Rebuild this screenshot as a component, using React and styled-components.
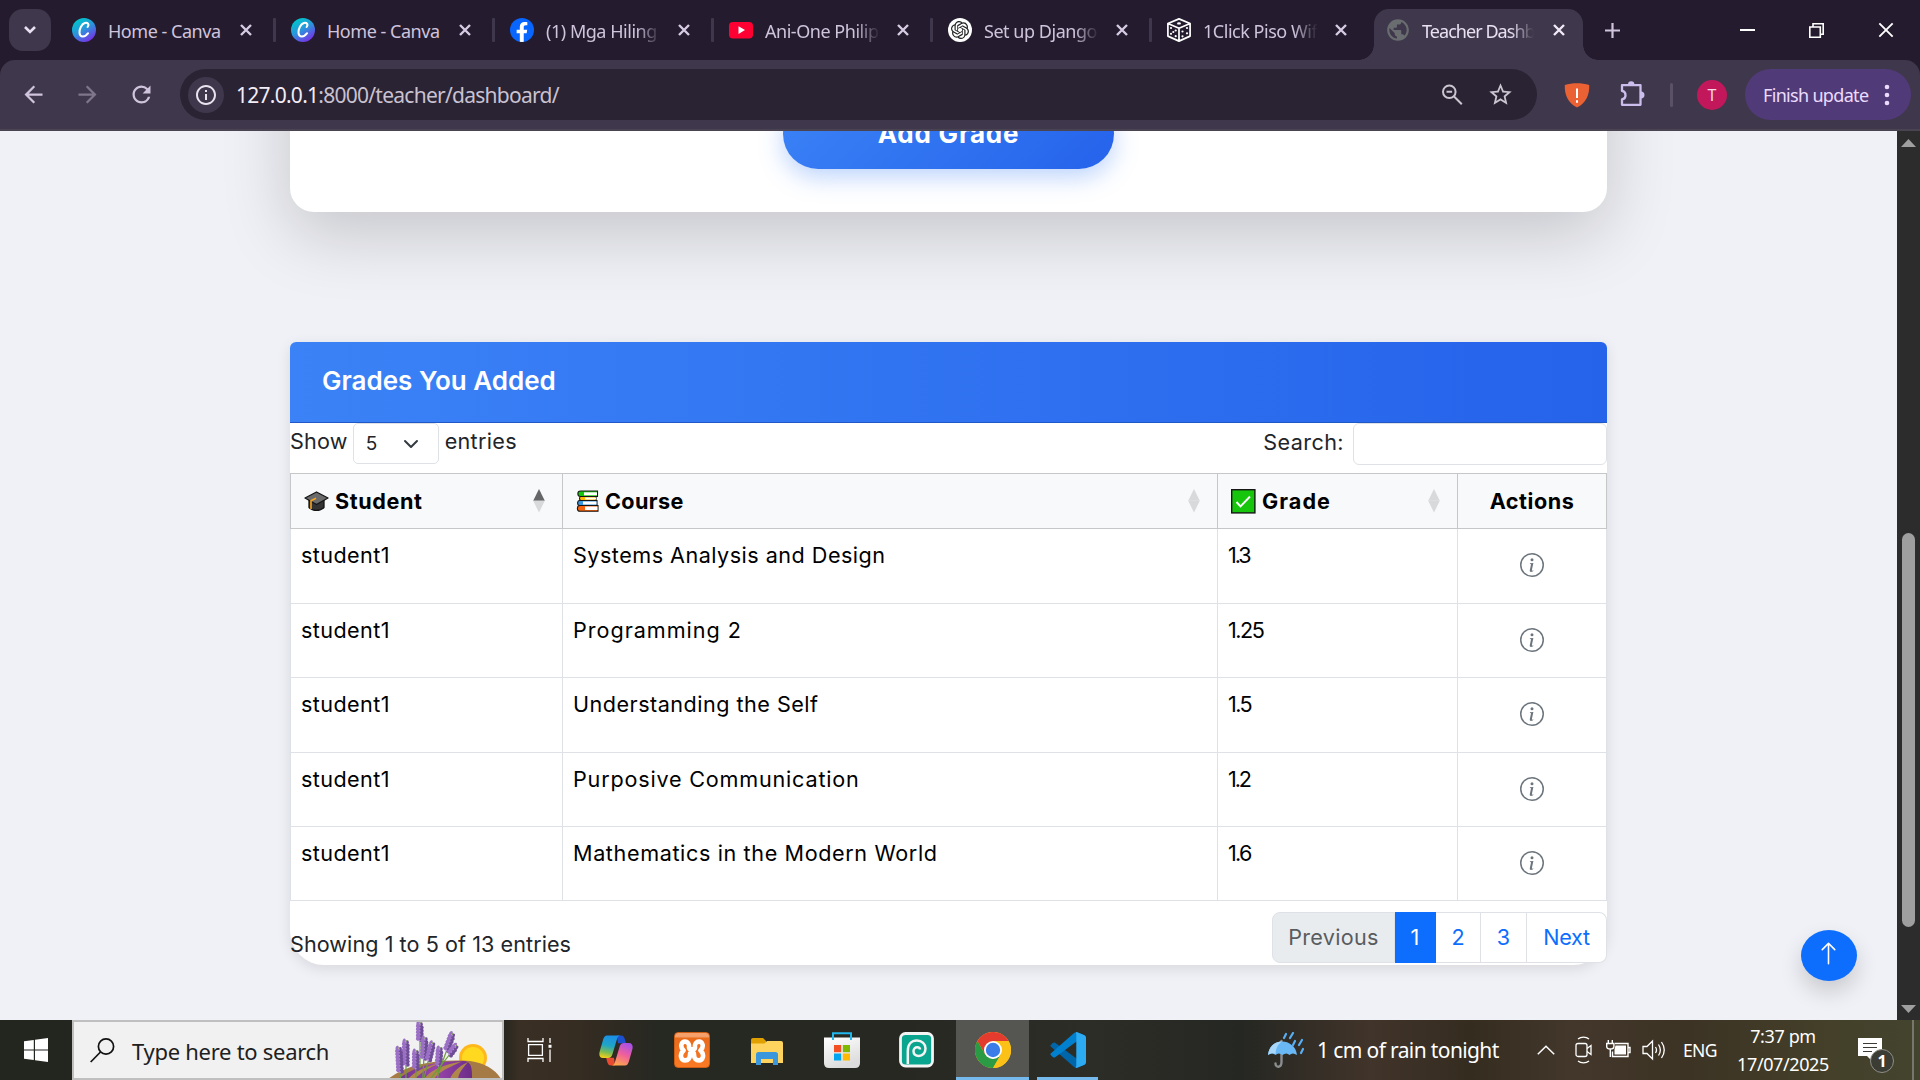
import React from "react";
import styled, { createGlobalStyle, css } from "styled-components";
import { MdPublic, MdRefresh, MdStarBorder, MdInfoOutline, MdArrowBack, MdArrowForward } from "react-icons/md";
import { BsInfoCircle, BsArrowUp } from "react-icons/bs";
import { SiOpenai } from "react-icons/si";
import { FaFacebookF } from "react-icons/fa";

const GlobalStyle = createGlobalStyle`
  *, *::before, *::after { box-sizing: border-box; }
  body { margin: 0; background: #f0f1f6; overflow: hidden; }
  svg { display: block; flex: none; }
`;

const Screen = styled.div`
  width: 1920px;
  height: 1080px;
  display: flex;
  flex-direction: column;
  overflow: hidden;
  font-family: "Noto Sans", "Open Sans", sans-serif;
`;

const Label = styled.span`
  display: block;
  white-space: nowrap;
  font-size: ${(p) => p.$size || 21.6}px;
  letter-spacing: ${(p) => p.$track || 0}px;
  font-weight: ${(p) => p.$weight || "inherit"};
`;

/* ---------- Browser window ---------- */

const TabStrip = styled.header`
  height: 60px;
  background: #241c2e;
  display: flex;
  padding-left: 9px;
  flex: none;
`;

const TabSearch = styled.div`
  width: 42px;
  height: 42px;
  margin-top: 9px;
  margin-right: 6px;
  border-radius: 14px;
  background: #3f374b;
  display: flex;
  align-items: center;
  justify-content: center;
`;

const Tab = styled.div`
  width: 219px;
  height: 60px;
  display: flex;
  align-items: center;
  padding-left: 15px;
  color: #cfc4dc;
`;

const ActiveTab = styled.div`
  width: 209px;
  height: 51px;
  margin: 9px 0 0 3px;
  padding: 0 0 9px 11px;
  border-radius: 15px 15px 0 0;
  background: #3f374b;
  color: #e9e0f2;
  display: flex;
  align-items: center;
  position: relative;
  &::before, &::after {
    content: "";
    position: absolute;
    bottom: 0;
    width: 15px;
    height: 15px;
  }
  &::before { left: -15px; background: radial-gradient(circle at 0 0, transparent 14.5px, #3f374b 15px); }
  &::after { right: -15px; background: radial-gradient(circle at 100% 0, transparent 14.5px, #3f374b 15px); }
`;

const TabTitle = styled.div`
  width: ${(p) => p.$width || 116}px;
  margin-left: ${(p) => p.$gap || 12}px;
  padding-top: 2px;
  font-size: 18px;
  line-height: 26px;
  letter-spacing: ${(p) => p.$track || -0.47}px;
  white-space: nowrap;
  overflow: hidden;
  ${(p) => p.$fade && css`mask-image: linear-gradient(90deg, #000 78%, transparent 99%);`}
`;

const CloseSlot = styled.div`
  width: 12px;
  margin-left: ${(p) => p.$left}px;
`;

const TabDivider = styled.i`
  width: 3px;
  height: 24px;
  margin-left: 21px;
  border-radius: 1px;
  background: #3f374b;
`;

const WindowControls = styled.div`
  display: flex;
  align-items: center;
  gap: 54px;
  height: 60px;
  margin-left: 120px;
`;

const NewTab = styled.div`
  display: flex;
  align-items: center;
  height: 60px;
  margin-left: 22px;
`;

const ToolbarBack = styled.div`
  flex: none;
  background: #241c2e;
`;

const Toolbar = styled.div`
  height: 71px;
  background: #3f374b;
  border-bottom: 2px solid #4a4452;
  border-radius: 15px 15px 0 0;
  display: flex;
  align-items: center;
  padding: 0 9px 0 19.5px;
  color: #cfc4dc;
`;

const NavButtons = styled.div`
  display: flex;
  align-items: center;
  gap: 27px;
  margin-right: 25.5px;
`;

const NavIcon = styled.span`
  display: flex;
  opacity: ${(p) => (p.$dim ? 0.45 : 1)};
`;

const Omnibox = styled.div`
  width: 1357px;
  height: 51px;
  border-radius: 26px;
  background: #2a2334;
  display: flex;
  align-items: center;
  padding: 0 23px 0 8px;
`;

const SiteInfo = styled.div`
  width: 36px;
  height: 36px;
  border-radius: 50%;
  background: #3f374b;
  color: #e9e3ef;
  display: flex;
  align-items: center;
  justify-content: center;
  margin-right: 12px;
`;

const Url = styled.div`
  flex: 1;
  font-size: 21px;
  line-height: 30px;
  letter-spacing: -0.74px;
  color: #c9c2d0;
  b { font-weight: 400; color: #f3edf8; }
`;

const OmniActions = styled.div`
  display: flex;
  align-items: center;
  gap: 23px;
  color: #cac5cf;
`;

const Extensions = styled.div`
  display: flex;
  align-items: center;
  margin-left: 27px;
`;

const ToolDivider = styled.i`
  width: 3px;
  height: 24px;
  margin: 0 24px;
  border-radius: 2px;
  background: #5a5167;
`;

const Avatar = styled.div`
  width: 30px;
  height: 30px;
  border-radius: 50%;
  background: #c2185b;
  color: #f5d9e4;
  font-size: 16px;
  line-height: 30px;
  text-align: center;
`;

const UpdateButton = styled.div`
  width: 166px;
  height: 51px;
  margin-left: 18px;
  border-radius: 26px;
  background: #513a78;
  color: #ebdcff;
  display: flex;
  align-items: center;
  justify-content: space-between;
  padding: 0 21px 0 18px;
`;

/* ---------- Page ---------- */

const Viewport = styled.div`
  height: 889px;
  flex: none;
  display: flex;
  position: relative;
  overflow: hidden;
`;

const Page = styled.main`
  width: 1897px;
  padding: 0 290px;
  overflow: hidden;
  background: #f0f1f6;
  font-family: Inter, "Open Sans", sans-serif;
  color: #212529;
`;

const FormCard = styled.section`
  height: 500px;
  margin: -419px 0 130px;
  border-radius: 24px;
  background: #fff;
  box-shadow: 0 22px 68px rgba(0, 0, 0, 0.18);
  display: flex;
  align-items: flex-end;
  justify-content: center;
  padding-bottom: 43px;
`;

const AddButton = styled.button`
  width: 331px;
  height: 70px;
  border: 0;
  padding: 0 0 1px;
  border-radius: 35px;
  background: linear-gradient(135deg, #3b82f6, #2563eb);
  box-shadow: 0 8px 24px rgba(59, 130, 246, 0.35);
  color: #fff;
  font: 700 26px/36px Inter, sans-serif;
  letter-spacing: 0.8px;
`;

const GradesCard = styled.section`
  height: 623px;
  background: #fff;
  border-radius: 6px 6px 34px 34px;
  box-shadow: 0 4px 14px rgba(0, 0, 0, 0.1);
`;

const CardHeader = styled.div`
  height: 81px;
  border-bottom: 1px solid #2158c8;
  border-radius: 6px 6px 0 0;
  background: linear-gradient(90deg, #3b82f6, #2563eb);
  color: #fff;
  padding: 23px 32px;
  line-height: 32px;
`;

const Controls = styled.div`
  height: 50px;
  display: flex;
  justify-content: space-between;
  line-height: 37px;
`;

const ControlGroup = styled.div`
  display: flex;
  align-items: flex-start;
`;

const SearchLabel = styled(Label)`
  line-height: 39px;
`;

const LengthSelect = styled.div`
  width: 86px;
  height: 41px;
  margin: 0 6px 0 5px;
  padding: 0 19px 0 12px;
  border: 1px solid #dee2e6;
  border-radius: 5px;
  display: flex;
  align-items: center;
  justify-content: space-between;
`;

const SearchInput = styled.input`
  width: 254px;
  height: 42px;
  margin-left: 9px;
  border: 1px solid #dee2e6;
  border-radius: 6px;
  background: #fff;
`;

const gridColumns = css`
  display: grid;
  grid-template-columns: 272px 655px 240px 149px;
`;

const HeadRow = styled.div`
  ${gridColumns}
  height: 56px;
  border: 1px solid #c6c7c8;
  border-width: 1px 0 1px 1px;
  background: #f8f9fb;
  color: #000;
`;

const HeadCell = styled.div`
  display: flex;
  align-items: center;
  justify-content: ${(p) => (p.$center ? "center" : "flex-start")};
  padding-left: ${(p) => (p.$center ? 0 : 13)}px;
  padding-right: ${(p) => (p.$center ? 0 : 17)}px;
  border-right: 1px solid #c6c7c8;
  line-height: 32px;
`;

const HeadIcon = styled.span`
  width: ${(p) => p.$width || 25}px;
  margin-right: 6px;
`;

const SortMark = styled.span`
  margin-left: auto;
`;

const BodyRow = styled.div`
  ${gridColumns}
  height: 74.25px;
  color: #000;
  border-left: 1px solid #dee2e6;
  ${HeadRow} + & { height: 75px; }
`;

const BodyCell = styled.div`
  border: 1px solid #dee2e6;
  border-width: 0 1px 1px 0;
  padding: 10px 10px;
  line-height: 33px;
`;

const InfoCell = styled(BodyCell)`
  display: flex;
  justify-content: center;
  padding: 24px 0 0;
  color: #6c757d;
`;

const CardFooter = styled.div`
  display: flex;
  justify-content: space-between;
  padding-top: 11px;
  line-height: 64px;
`;

const Pagination = styled.nav`
  display: flex;
  height: 51px;
`;

const PageItem = styled.span`
  width: ${(p) => p.$width}px;
  height: 51px;
  line-height: 48px;
  display: flex;
  justify-content: center;
  border: 1px solid #dee2e6;
  border-left-width: ${(p) => (p.$first ? 1 : 0)}px;
  background: #fff;
  color: #0d6efd;
  &:first-child { border-radius: 8px 0 0 8px; }
  &:last-child { border-radius: 0 8px 8px 0; }
  ${(p) => p.$disabled && css`background: #e9ecef; color: #595c5f;`}
  ${(p) => p.$active && css`background: #0d6efd; border-color: #0d6efd; color: #fff;`}
`;

const TopButton = styled.div`
  position: absolute;
  left: 1801px;
  top: 799px;
  width: 56px;
  height: 51px;
  border-radius: 50%;
  background: #0d6efd;
  color: #fff;
  box-shadow: 0 11px 22px rgba(0, 0, 0, 0.16);
  display: flex;
  align-items: center;
  justify-content: center;
  padding: 0 1px 4px 0;
`;

const Scrollbar = styled.div`
  width: 23px;
  height: 889px;
  background: #2c2c2c;
  display: flex;
  flex-direction: column;
  align-items: center;
  padding: 8px 0 7px;
`;

const Thumb = styled.div`
  width: 13px;
  height: 394px;
  margin: 386px 0 auto;
  border-radius: 7px;
  background: #9f9f9f;
`;

/* ---------- Taskbar ---------- */

const Taskbar = styled.footer`
  height: 60px;
  flex: none;
  display: flex;
  color: #fff;
  background: linear-gradient(90deg, #23251f 0, #23251f 500px, #3a2f24 520px, #352c22 580px, #262822 660px, #272822 900px, #2d2d27 1090px, #252722 1240px, #41342a 1370px, #352c20 1470px, #43372b 1570px, #3c3324 1690px, #444029 1830px, #43442f 1920px);
`;

const StartButton = styled.div`
  width: 72px;
  display: flex;
  align-items: center;
  justify-content: center;
`;

const SearchBox = styled.div`
  width: 432px;
  height: 60px;
  border: 2px solid #bfbfbf;
  background: #f1f1f1;
  color: #202020;
  display: flex;
  align-items: center;
  padding-left: 16px;
  overflow: hidden;
`;

const SearchText = styled(Label)`
  width: 260px;
  margin-left: 17px;
  padding-top: 1px;
`;

const TaskSlot = styled.div`
  width: ${(p) => p.$width || 75}px;
  height: 60px;
  display: flex;
  align-items: center;
  justify-content: center;
  border-bottom: 3px solid ${(p) => (p.$open ? "#76b9ed" : "transparent")};
  padding-top: ${(p) => p.$drop || 3}px;
  background: ${(p) => (p.$active ? "#555652" : "transparent")};
`;

const Spacer = styled.div`
  width: ${(p) => p.$width}px;
  flex: none;
`;

const Tray = styled.div`
  display: flex;
  align-items: center;
  margin-left: auto;
  height: 60px;
`;

const TraySlot = styled.div`
  width: ${(p) => p.$width}px;
  display: flex;
`;

const Clock = styled.div`
  width: 122px;
  display: flex;
  flex-direction: column;
  align-items: center;
  line-height: 28px;
`;

const Notice = styled.div`
  width: 68px;
  padding-left: 14px;
  height: 60px;
  position: relative;
  padding-top: 18px;
`;

const Badge = styled.b`
  position: absolute;
  left: 26px;
  top: 29px;
  width: 24px;
  height: 24px;
  border: 1px solid #8f8f88;
  border-radius: 50%;
  background: #3b3c34;
  font-size: 16px;
  line-height: 22px;
  text-align: center;
`;

const DesktopEdge = styled.i`
  height: 60px;
  width: 8px;
  border-left: 2px solid #77776b;
`;

/* ---------- Drawings ---------- */

const Cross = ({ color = "#d6cbe2", size = 12, weight = 2.4 }) => (
  <svg width={size} height={size} viewBox="0 0 12 12"><path d="M1 1 11 11M11 1 1 11" stroke={color} strokeWidth={weight} /></svg>
);

const CanvaIcon = () => (
  <svg width="24" height="24" viewBox="0 0 24 24">
    <defs>
      <linearGradient id="canva" x1=".2" y1=".1" x2=".75" y2="1"><stop offset="0" stopColor="#00c4cc" /><stop offset=".45" stopColor="#2c93dc" /><stop offset="1" stopColor="#7d2ae8" /></linearGradient>
    </defs>
    <circle cx="12" cy="12" r="12" fill="url(#canva)" />
    <path d="M15.600 9C17.600 6.200 15.600 4 12.800 5 9.500 6.200 7.200 11 7.500 14.800c.4 4.800 5.500 4.800 8.600.4" fill="none" stroke="#fff" strokeWidth="2" strokeLinecap="round" />
  </svg>
);

const FacebookIcon = styled.span`
  width: 24px;
  height: 24px;
  border-radius: 50%;
  background: #0866ff;
  color: #fff;
  display: flex;
  justify-content: center;
  align-items: flex-end;
  overflow: hidden;
`;

const YoutubeIcon = () => (
  <svg width="24" height="24" viewBox="0 0 24 24"><rect y="4" width="24" height="16.500" rx="4" fill="#ff0033" /><path d="M9.500 8.300v7.600L16 12.100z" fill="#fff" /></svg>
);

const GptIcon = styled.span`
  width: 24px;
  height: 24px;
  border-radius: 50%;
  background: #fff;
  color: #222;
  display: flex;
  align-items: center;
  justify-content: center;
`;

const DiceIcon = () => (
  <svg width="24" height="24" viewBox="0 0 24 24" fill="none" stroke="#fff" strokeWidth="1.700" strokeLinejoin="round">
    <path d="M12 .9 23.100 5.500v12.600L12 23.100.9 18.100V5.500zM.9 5.500 12 10.200l11.100-4.700M12 10.200v12.900" />
    <g fill="#fff" stroke="none">
      <ellipse cx="12" cy="5.400" rx="1.900" ry="1.200" />
      <circle cx="4" cy="10" r="1.100" /><circle cx="8.700" cy="12.500" r="1.100" /><circle cx="6.300" cy="14" r="1.100" /><circle cx="4" cy="15.800" r="1.100" /><circle cx="8.700" cy="18.200" r="1.100" />
      <circle cx="20" cy="10" r="1.100" /><circle cx="15.500" cy="13.500" r="1.100" /><circle cx="20" cy="15.300" r="1.100" /><circle cx="15.500" cy="18.300" r="1.100" />
    </g>
  </svg>
);

const ZoomOutIcon = () => (
  <svg width="24" height="24" viewBox="0 0 24 24" fill="none" stroke="currentColor" strokeWidth="2"><circle cx="9.300" cy="8.800" r="6.300" /><path d="m13.800 13.300 8 8M6.500 8.800h5.600" /></svg>
);

const ShieldIcon = () => (
  <svg width="26" height="26" viewBox="0 0 26 26"><path d="M.8 3C8 .6 18 .6 25.200 3c.4 10-3.200 18-12.200 22.600C4 21 .4 13 .8 3z" fill="#ea6234" /><path d="M13 6.500v9.500M13 18.300v2.500" stroke="#fff" strokeWidth="2" /></svg>
);

const PuzzleIcon = () => (
  <svg width="27" height="27" viewBox="0 0 27 27"><path d="M3 4.200h18.500v19.600H3v-5.400c4.700-.8 4.700-7.700 0-8.500z" fill="none" stroke="#cbbdec" strokeWidth="2.300" strokeLinejoin="round" /><path d="M9 3.500a3.200 3.200 0 0 1 6.400 0zM22 10.500a3.500 3.500 0 0 1 0 7z" fill="#cbbdec" /></svg>
);

const CapIcon = () => (
  <svg width="25" height="21" viewBox="0 0 25 21" stroke="#151515" strokeWidth="1.300" strokeLinejoin="round">
    <path d="M5 9v7.500c4 3.900 11 3.900 15 0V9z" fill="#333" />
    <path d="M12.500 1 24 7l-11.500 6.500L1 7z" fill="#6b6b6b" />
    <path d="M12 7.200 7 9.800V18" fill="none" stroke="#f5a623" strokeWidth="1.600" />
  </svg>
);

const BooksIcon = () => (
  <svg width="23" height="22" viewBox="0 0 23 22" stroke="#161616" strokeWidth="1.100">
    <path d="M21.500 1H4.500C1 1 1 6.500 4.500 6.500h17z" fill="#16c60c" /><path d="M21 2.300H8v3h13z" fill="#fff" stroke="none" />
    <path d="M20 6.500H5c-2 0-2 4 0 4h15z" fill="#ffb900" /><path d="M20 7.500H9v2h11z" fill="#fff" stroke="none" />
    <path d="M21 10.500H3.500c-2.500 0-2.500 5 0 5H21z" fill="#3a96dd" /><path d="M20.500 11.500H7v3h13.500z" fill="#fff" stroke="none" />
    <path d="M22 15.500H4c-3.500 0-3.500 5.800 0 5.800h18z" fill="#f7630c" /><path d="M21.500 16.500H9v3.500h12.500z" fill="#fff" stroke="none" />
  </svg>
);

const CheckIcon = () => (
  <svg width="25" height="25" viewBox="0 0 25 25"><rect x=".7" y=".7" width="23.200" height="23.200" fill="#16c60c" stroke="#161616" strokeWidth="1.400" /><path d="m5.500 13 4 4.300L19 7.500" fill="none" stroke="#fff" strokeWidth="1.900" /></svg>
);

const SortIcon = ({ sorted }) => (
  <svg width="12" height="24" viewBox="0 0 12 24"><path d="M6 0 11.800 11.800H.2z" fill={sorted ? "#656668" : "#d8d9db"} /><path d="M6 23.500.2 11.800h11.600z" fill="#d8d9db" /></svg>
);

const Spike = ({ x, y, n, tilt = 0 }) => (
  <g transform={`rotate(${tilt} ${x} ${y})`}>
    <path d={`M${x} ${y}v46`} stroke="#6d9a3a" strokeWidth="1.200" />
    {Array.from({ length: n }, (_, i) => (
      <g key={i}>
        <ellipse cx={x - 1.4} cy={y + 1.5 + i * 3.2} rx={i ? 2.2 : 1.4} ry="2.1" fill="#9b6fc4" transform={`rotate(30 ${x} ${y + i * 3.2})`} />
        <ellipse cx={x + 1.5} cy={y + 2.3 + i * 3.2} rx={i ? 2.2 : 1.3} ry="2.1" fill="#6f4c98" />
        <circle cx={x - 0.3} cy={y + 2.6 + i * 3.2} r="0.9" fill="#b48bd8" />
      </g>
    ))}
  </g>
);

const LavenderArt = () => (
  <svg width="118" height="58" viewBox="0 0 118 58">
    <defs><linearGradient id="field"><stop offset="0" stopColor="#6c3290" /><stop offset=".5" stopColor="#9a45ac" /><stop offset="1" stopColor="#6b2c87" /></linearGradient></defs>
    <circle cx="89" cy="37" r="14" fill="#ffb81c" /><circle cx="89" cy="37" r="11" fill="#ffd91f" />
    <path d="M4 58C25 42 55 38 86 40c15 2 26 9 31 18z" fill="#a67a45" />
    <path d="M14 58C32 44 55 40 80 40c8 1 8 8 8 18z" fill="url(#field)" />
    <path d="M40 58c7-9 18-14 38-17.500-13 6-23 10-28 17.500z" fill="#b0874a" />
    <path d="M66 58c3-8 10-13 18-17-5 6-9 10-10 17z" fill="#b0874a" />
    <path d="M24 58c5-6 15-12 32-16-11 5-20 10-25 16z" fill="#b0874a" />
    <Spike x={36} y={1} n={6} /><Spike x={22} y={19} n={8} /><Spike x={41} y={16} n={7} tilt={3} />
    <Spike x={15} y={26} n={8} tilt={-3} /><Spike x={49} y={21} n={6} tilt={14} /><Spike x={32} y={29} n={6} />
    <Spike x={56} y={26} n={6} tilt={4} /><Spike x={69} y={12} n={6} tilt={20} /><Spike x={73} y={24} n={4} tilt={38} />
  </svg>
);

const TaskViewIcon = () => (
  <svg width="25" height="24" viewBox="0 0 25 24" fill="none" stroke="#fff" strokeWidth="1.300"><path d="M1 0v3.500h15V0M1 24v-3.500h15V24M1.600 6.700h13.800v10.600H1.600zM23 0v5M23 11.500V24" /><path d="M21.500 6.800h3v3h-3z" fill="#fff" stroke="none" /></svg>
);

const CopilotIcon = () => (
  <svg width="34" height="31" viewBox="0 0 34 31">
    <defs>
      <linearGradient id="cpa" x1=".5" x2=".3" y2="1"><stop offset="0" stopColor="#1a8fe8" /><stop offset=".45" stopColor="#20a6c4" /><stop offset=".75" stopColor="#7dbb52" /><stop offset="1" stopColor="#f3cf1c" /></linearGradient>
      <linearGradient id="cpb" x1=".7" x2=".3" y2="1"><stop offset="0" stopColor="#a850e8" /><stop offset=".5" stopColor="#f0609a" /><stop offset="1" stopColor="#ffa84c" /></linearGradient>
    </defs>
    <path d="M18 .5h4c2.500 0 3.200 1.600 4 4.300l1 3.400h-8z" fill="#1d50cf" />
    <path d="M16 30.500h-4c-2.500 0-3.200-1.600-4-4.300l-.9-3.400H15z" fill="#e84a32" />
    <path d="M8 .5h13c-1.800.4-2.600 2-3.300 4.400l-4.200 14c-.8 2.700-2 4.100-4.500 4.100H4C.8 23-.3 20 .7 16.500L4 5C4.900 2 5.900.5 8 .5z" fill="url(#cpa)" />
    <path d="M26 30.500H13c1.800-.4 2.600-2 3.300-4.400l4.200-14c.8-2.700 2-4.100 4.500-4.100h5c3.200 0 4.300 3 3.300 6.500L30 26c-.9 3-1.900 4.500-4 4.500z" fill="url(#cpb)" />
  </svg>
);

const XamppTile = styled.span`
  width: 36px;
  height: 36px;
  border-radius: 4px;
  border: 1px solid #cf5c13;
  background: linear-gradient(#f6a06b 0 10%, #e96b1c 16%, #fb7a24 100%);
  color: #fff;
  display: flex;
  align-items: center;
  justify-content: center;
  padding-top: 2px;
`;

const XamppMark = () => (
  <svg width="28" height="24" viewBox="0 0 28 24" fill="none" stroke="#fff" strokeWidth="4.600" strokeLinejoin="round" strokeLinecap="round"><path d="M11 8.500C11.500 4.500 9.500 2.600 7 2.600 3.500 2.600 1.500 7.500 5.500 11.500 1 15.500 3 21.400 7.300 21.400c2.700 0 4.700-2 4.700-5.900 0-2.500 4-2.500 4 0 0 3.900 2 5.900 4.700 5.900 4.300 0 6.300-5.900 1.800-9.900C26.500 7.500 24.500 2.600 21 2.600c-2.500 0-4.500 1.900-4 5.900 0 2.500-6 2.500-6 0z" /></svg>
);

const FolderIcon = () => (
  <svg width="32" height="27" viewBox="0 0 32 27"><path d="M0 2q0-2 2-2h10l3 3v4H0z" fill="#e0a100" /><path d="M0 5.500h13.500L16 3h14q2 0 2 2v20H0z" fill="#ffd45e" /><path d="M5 27V16.500Q5 14 7.500 14h17q2.500 0 2.500 2.500V27h-5v-6H10v6z" fill="#3b97dc" /></svg>
);

const StoreIcon = () => (
  <svg width="36" height="36" viewBox="0 0 36 36"><defs><linearGradient id="bag" y2="1" x2=".4"><stop offset="0" stopColor="#fff" /><stop offset="1" stopColor="#dcdcdc" /></linearGradient></defs><path d="M0 5.500h36V31q0 5-5 5H5q-5 0-5-5z" fill="url(#bag)" /><path d="M9 8V1.200h18V8" fill="none" stroke="#22b8ef" strokeWidth="2" /><path d="M10 13h7.200v7.200H10z" fill="#f25022" /><path d="M18.800 13H26v7.200h-7.200z" fill="#7fba00" /><path d="M10 21.500h7.200v7H10z" fill="#00a4ef" /><path d="M18.800 21.500H26v7h-7.200z" fill="#ffb900" /></svg>
);

const SwirlIcon = () => (
  <svg width="35" height="36" viewBox="0 0 35 36"><rect x="1.500" y="1.500" width="32" height="32.500" rx="5" fill="#0aa58e" stroke="#f4f4f4" strokeWidth="2.800" /><path d="M8.800 32V19c0-7 4-10.500 9-10.500 5.300 0 8.700 3.500 8.700 8s-3 7.500-6.700 7.500c-3.500 0-5.300-2.200-5.300-4.700s1.800-4.100 3.700-4.100c1.700 0 2.800 1 2.800 2.400" fill="none" stroke="#f4f4f4" strokeWidth="2.500" /></svg>
);

const ChromeIcon = () => (
  <svg width="36" height="36" viewBox="0 0 36 36">
    <circle cx="18" cy="18" r="18" fill="#fbc116" />
    <path d="M18 9h15.600A18 18 0 0 0 2.400 9l7.800 13.500z" fill="#e33b2e" />
    <path d="M2.400 9A18 18 0 0 0 18 36l7.800-13.500-7.800 4.500-7.800-4.500z" fill="#2a9a45" />
    <path d="M18 36a18 18 0 0 0 15.600-27H18l7.800 13.500z" fill="#fbc116" />
    <circle cx="18" cy="18" r="9" fill="#fff" /><circle cx="18" cy="18" r="7.200" fill="#3a7de9" />
  </svg>
);

const CodeIcon = () => (
  <svg width="36" height="36" viewBox="0 0 100 100"><path d="M2 36 8.500 30q3-2 6 0L96 90 75 99q-5 1-8-2L2 40q-2-2 0-4z" fill="#0065a9" /><path d="M2 64 8.500 70q3 2 6 0L96 10 75 1q-5-1-8 2L2 60q-2 2 0 4z" fill="#0080cf" /><path d="M74 0 96 9q4 2 4 6v70q0 4-4 6l-22 9q-5 0-1-6V6q-3-5 1-6z" fill="#2caaf2" /></svg>
);

const RainIcon = () => (
  <svg width="36" height="37" viewBox="0 0 36 37"><path d="M13.500 9v21c0 6-6 6-6 1.500" fill="none" stroke="#8a8d8e" strokeWidth="2.400" strokeLinecap="round" /><path d="M0 23C1 14 7 9.500 14 9.500S28 14 29 23c-3-2-5.500-2-7.500 0-2-2-4.500-2-7 0-2.500-2-5-2-7 0-2-2-4.500-2-7.500 0z" fill="#69b7f5" /><path d="M7.500 22C8 16 10 12 14 9.500c-7 0-13 5-14 13.500 3-2 5-2 7.500-1z" fill="#a9d7fa" /><path d="m18 2-2 4M25 1l-3 5M27 9l-2 4M34 8l-3 5M35 17l-2 4" stroke="#58adf3" strokeWidth="2.200" strokeLinecap="round" /></svg>
);

const MeetIcon = () => (
  <svg width="18" height="30" viewBox="0 0 18 30" fill="none" stroke="#fff" strokeWidth="1.300"><rect x="1" y="8.500" width="11" height="13" rx="2" /><path d="m12 13.500 4-3v9l-4-3M3 4c3-2.500 8-2.500 11 0M3 26c3 2.500 8 2.500 11 0" /></svg>
);

const BatteryIcon = () => (
  <svg width="25" height="20" viewBox="0 0 25 20" fill="none" stroke="#fff" strokeWidth="1.400"><path d="M9 3.500h13v13H6.500v-5M22 7.500h2v5h-2M2.300 0v3.500M6.300 0v3.500M.7 3.500h7.200v3q0 2.500-3.600 2.500T.7 6.500zM4.300 9v8" /><path d="M9.500 5.500H20v9H8.500v-5z" fill="#fff" stroke="none" /></svg>
);

const SpeakerIcon = () => (
  <svg width="24" height="22" viewBox="0 0 24 22" fill="none" stroke="#fff" strokeWidth="1.300"><path d="M1 7.500h4L10.500 2v18L5 14.500H1zM13.500 8q2 3 0 6M16.500 5.500q3.700 5.500 0 11M19.500 3q5.500 8 0 16" /></svg>
);

/* ---------- Data ---------- */

const tabs = [
  { icon: <CanvaIcon />, title: "Home - Canva" },
  { icon: <CanvaIcon />, title: "Home - Canva" },
  { icon: <FacebookIcon><FaFacebookF size={20} /></FacebookIcon>, title: "(1) Mga Hiling", fade: true },
  { icon: <YoutubeIcon />, title: "Ani-One Philip", fade: true },
  { icon: <GptIcon><SiOpenai size={18} /></GptIcon>, title: "Set up Django", fade: true },
  { icon: <DiceIcon />, title: "1Click Piso Wifi", fade: true },
];

const grades = [
  ["Systems Analysis and Design", 0.48, "1.3", -2.1],
  ["Programming 2", 0.97, "1.25", -1.5],
  ["Understanding the Self", 0.48, "1.5", -1.6],
  ["Purposive Communication", 0.8, "1.2", -2.1],
  ["Mathematics in the Modern World", 0.62, "1.6", -1.7],
];

export default function App() {
  return (
    <Screen>
      <GlobalStyle />
      <TabStrip>
        <TabSearch><svg width="14" height="10" viewBox="0 0 14 10"><path d="m2 2 5 5 5-5" fill="none" stroke="#e9e0f2" strokeWidth="2.600" /></svg></TabSearch>
        {tabs.map((t, i) => (
          <Tab key={i}>
            {t.icon}
            <TabTitle $fade={t.fade}>{t.title}</TabTitle>
            <CloseSlot $left={16}><Cross /></CloseSlot>
            {i < 5 && <TabDivider />}
          </Tab>
        ))}
        <ActiveTab>
          <MdPublic size={26} color="#6a6d70" />
          <TabTitle $fade $width={113} $gap={11} $track={-0.95}>Teacher Dashboard</TabTitle>
          <CloseSlot $left={17.5}><Cross color="#f1e9f8" /></CloseSlot>
        </ActiveTab>
        <NewTab><svg width="15" height="15" viewBox="0 0 15 15"><path d="M7.500 0v15M0 7.500h15" stroke="#cfc4dc" strokeWidth="2.200" /></svg></NewTab>
        <WindowControls>
          <svg width="15" height="15" viewBox="0 0 15 15"><path d="M0 7h15" stroke="#fff" strokeWidth="2" /></svg>
          <svg width="15" height="15" viewBox="0 0 15 15" fill="none" stroke="#fff" strokeWidth="1.600"><path d="M.8 4h10.500v10.200H.8zM4 4V.8h10.200v10.400h-3" /></svg>
          <Cross color="#fff" size={16} weight={1.4} />
        </WindowControls>
      </TabStrip>

      <ToolbarBack>
        <Toolbar>
          <NavButtons>
            <NavIcon><MdArrowBack size={27} /></NavIcon>
            <NavIcon $dim><MdArrowForward size={27} /></NavIcon>
            <NavIcon><MdRefresh size={27} /></NavIcon>
          </NavButtons>
          <Omnibox>
            <SiteInfo><MdInfoOutline size={24} /></SiteInfo>
            <Url><b>127.0.0.1</b>:8000/teacher/dashboard/</Url>
            <OmniActions><ZoomOutIcon /><MdStarBorder size={27} /></OmniActions>
          </Omnibox>
          <Extensions>
            <ShieldIcon />
            <Spacer $width={29} />
            <PuzzleIcon />
            <ToolDivider />
            <Avatar>T</Avatar>
          </Extensions>
          <UpdateButton>
            <Label $size={18} $track={-0.68}>Finish update</Label>
            <svg width="6" height="22" viewBox="0 0 6 22" fill="#ebdcff"><circle cx="3" cy="3" r="2.300" /><circle cx="3" cy="11" r="2.300" /><circle cx="3" cy="19" r="2.300" /></svg>
          </UpdateButton>
        </Toolbar>
      </ToolbarBack>

      <Viewport>
        <Page>
          <FormCard><AddButton>Add Grade</AddButton></FormCard>
          <GradesCard>
            <CardHeader><Label $size={26} $weight={600}>Grades You Added</Label></CardHeader>
            <Controls>
              <ControlGroup>
                <Label $track={0.2}>Show</Label>
                <LengthSelect>
                  <Label $size={19}>5</Label>
                  <svg width="16" height="16" viewBox="0 0 16 16"><path d="m2 5 6 6 6-6" fill="none" stroke="#343a40" strokeWidth="2" strokeLinecap="round" strokeLinejoin="round" /></svg>
                </LengthSelect>
                <Label $track={0.3}>entries</Label>
              </ControlGroup>
              <ControlGroup>
                <SearchLabel $track={0.4}>Search:</SearchLabel>
                <SearchInput aria-label="Search" />
              </ControlGroup>
            </Controls>
            <HeadRow>
              <HeadCell><HeadIcon><CapIcon /></HeadIcon><Label $track={0.6} $weight={700}>Student</Label><SortMark><SortIcon sorted /></SortMark></HeadCell>
              <HeadCell><HeadIcon $width={23}><BooksIcon /></HeadIcon><Label $track={0.4} $weight={700}>Course</Label><SortMark><SortIcon /></SortMark></HeadCell>
              <HeadCell><HeadIcon><CheckIcon /></HeadIcon><Label $track={1.05} $weight={700}>Grade</Label><SortMark><SortIcon /></SortMark></HeadCell>
              <HeadCell $center><Label $track={0.55} $weight={700}>Actions</Label></HeadCell>
            </HeadRow>
            {grades.map(([course, track, grade, gradeTrack]) => (
              <BodyRow key={course}>
                <BodyCell><Label $track={0.4}>student1</Label></BodyCell>
                <BodyCell><Label $track={track}>{course}</Label></BodyCell>
                <BodyCell><Label $track={gradeTrack}>{grade}</Label></BodyCell>
                <InfoCell><BsInfoCircle size={24} /></InfoCell>
              </BodyRow>
            ))}
            <CardFooter>
              <Label $track={0.06}>Showing 1 to 5 of 13 entries</Label>
              <Pagination>
                <PageItem $width={123} $first $disabled><Label $track={0.3}>Previous</Label></PageItem>
                <PageItem $width={41} $active><Label>1</Label></PageItem>
                <PageItem $width={45}><Label>2</Label></PageItem>
                <PageItem $width={46}><Label>3</Label></PageItem>
                <PageItem $width={80}><Label $track={-0.3}>Next</Label></PageItem>
              </Pagination>
            </CardFooter>
          </GradesCard>
        </Page>
        <Scrollbar>
          <svg width="15" height="8" viewBox="0 0 15 8"><path d="M0 8 7.500 0 15 8z" fill="#9f9f9f" /></svg>
          <Thumb />
          <svg width="15" height="8" viewBox="0 0 15 8"><path d="M0 0h15L7.500 8z" fill="#9f9f9f" /></svg>
        </Scrollbar>
        <TopButton><BsArrowUp size={25} /></TopButton>
      </Viewport>

      <Taskbar>
        <StartButton><svg width="24" height="24" viewBox="0 0 24 24" fill="#fff"><path d="M0 3.300 9.800 2v9.400H0zM11 1.800 24 0v11.400H11zM0 12.600h9.800V22L0 20.700zM11 12.600h13V24l-13-1.800z" /></svg></StartButton>
        <SearchBox>
          <svg width="25" height="25" viewBox="0 0 25 25" fill="none" stroke="#111" strokeWidth="1.700"><circle cx="16" cy="8.500" r="7.600" /><path d="M10.500 14 .7 24" /></svg>
          <SearchText $size={22} $track={-0.28}>Type here to search</SearchText>
          <LavenderArt />
        </SearchBox>
        <TaskSlot $width={71}><TaskViewIcon /></TaskSlot>
        <TaskSlot $width={82}><CopilotIcon /></TaskSlot>
        <TaskSlot $width={70}><XamppTile><XamppMark /></XamppTile></TaskSlot>
        <TaskSlot $width={80} $drop={5}><FolderIcon /></TaskSlot>
        <TaskSlot $width={69}><StoreIcon /></TaskSlot>
        <TaskSlot $width={80}><SwirlIcon /></TaskSlot>
        <TaskSlot $width={73} $open $active><ChromeIcon /></TaskSlot>
        <Spacer $width={8} />
        <TaskSlot $width={61} $open><CodeIcon /></TaskSlot>
        <Tray>
          <TraySlot $width={49}><RainIcon /></TraySlot>
          <TraySlot $width={220}><Label $size={21} $track={-0.62}>1 cm of rain tonight</Label></TraySlot>
          <TraySlot $width={38}><svg width="18" height="10" viewBox="0 0 18 10"><path d="m.8 9.300 8.200-8 8.200 8" fill="none" stroke="#fff" strokeWidth="1.500" /></svg></TraySlot>
          <TraySlot $width={31}><MeetIcon /></TraySlot>
          <TraySlot $width={36}><BatteryIcon /></TraySlot>
          <TraySlot $width={41}><SpeakerIcon /></TraySlot>
          <TraySlot $width={39}><Label $size={17.5} $track={-0.7}>ENG</Label></TraySlot>
          <Clock><Label $size={18} $track={-0.38}>7:37 pm</Label><Label $size={18} $track={-0.4}>17/07/2025</Label></Clock>
          <Notice>
            <svg width="25" height="25" viewBox="0 0 25 25"><path d="M0 0h24v18h-9v6l-6-6H0z" fill="#fff" /><path d="M5 5.500h14M5 9.500h14M5 13.500h9" stroke="#3b3c34" strokeWidth="1.200" /></svg>
            <Badge>1</Badge>
          </Notice>
          <DesktopEdge />
        </Tray>
      </Taskbar>
    </Screen>
  );
}
